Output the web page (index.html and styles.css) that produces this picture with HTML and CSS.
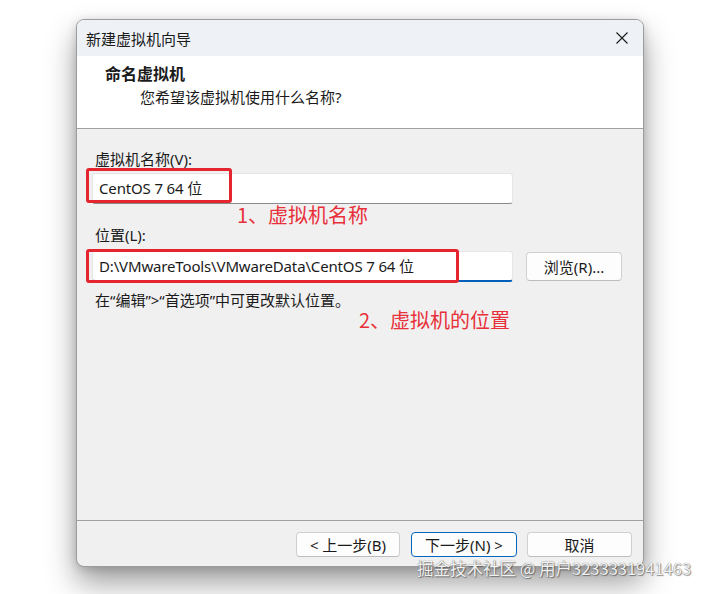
FILE: index.html
```html
<!DOCTYPE html>
<html lang="zh-CN">
<head>
<meta charset="utf-8">
<title>新建虚拟机向导</title>
<link rel="stylesheet" href="styles.css">
</head>
<body>
<div class="window">
  <div class="titlebar">
    <span class="title">新建虚拟机向导</span>
    <span class="close">
      <svg width="12" height="12" viewBox="0 0 12 12"><path d="M0.5 0.5 L11.5 11.5 M11.5 0.5 L0.5 11.5" stroke="#1a1a1a" stroke-width="1.1" fill="none"/></svg>
    </span>
  </div>
  <div class="header">
    <div class="h-title">命名虚拟机</div>
    <div class="h-sub">您希望该虚拟机使用什么名称?</div>
  </div>
  <div class="sep"></div>
  <div class="content">
    <div class="label">虚拟机名称(V):</div>
    <div class="input name">CentOS 7 64 位</div>
    <div class="label label2">位置(L):</div>
    <div class="row">
      <div class="input loc">D:\VMwareTools\VMwareData\CentOS 7 64 位</div>
      <div class="btn browse">浏览(R)...</div>
    </div>
    <div class="hint">在“编辑”&gt;“首选项”中可更改默认位置。</div>

    <div class="mark box1"></div>
    <div class="mark box2"></div>
    <div class="note note1">1、虚拟机名称</div>
    <div class="note note2">2、虚拟机的位置</div>
  </div>
  <div class="sep"></div>
  <div class="footer">
    <div class="btn back">&lt; 上一步(B)</div>
    <div class="btn next">下一步(N) &gt;</div>
    <div class="btn cancel">取消</div>
  </div>
</div>
<div class="watermark">掘金技术社区 @ 用户3233331941463</div>
</body>
</html>
```

FILE: styles.css
```css
html, body {
  margin: 0;
  padding: 0;
  background: #ffffff;
  width: 709px;
  height: 594px;
  overflow: hidden;
  position: relative;
  font-family: "Noto Sans", "Noto Sans CJK SC", sans-serif;
  font-size: 15px;
  color: #1a1a1a;
}

.window {
  box-sizing: border-box;
  margin: 19px 0 0 76px;
  width: 568px;
  height: 548px;
  border: 1px solid #9c9c9c;
  border-radius: 8px;
  overflow: hidden;
  display: flex;
  flex-direction: column;
  background: #f0f0f0;
  box-shadow: 0 16px 30px rgba(0, 0, 0, 0.38), 0 2px 10px rgba(0, 0, 0, 0.16);
}

.titlebar {
  height: 36px;
  flex: none;
  background: #eef2f7;
  display: flex;
  align-items: center;
  justify-content: space-between;
  padding: 0 15px 0 9px;
}

.title {
  font-size: 15px;
  line-height: 20px;
  margin-top: 1px;
}

.close {
  display: flex;
  width: 12px;
  height: 12px;
}

.header {
  height: 72px;
  flex: none;
  background: #ffffff;
  padding: 8px 0 0 28px;
  box-sizing: border-box;
}

.h-title {
  font-weight: bold;
  font-size: 16px;
  line-height: 20px;
}

.h-sub {
  margin-top: 3px;
  padding-left: 35px;
  font-size: 15px;
  line-height: 20px;
}

.sep {
  height: 1px;
  flex: none;
  background: #a0a0a0;
}

.content {
  flex: 1;
  position: relative;
  padding: 20px 0 0 15px;
  box-sizing: border-box;
}

.label {
  padding-left: 3px;
  line-height: 20px;
}

.label2 {
  margin-top: 21px;
}

.input {
  box-sizing: border-box;
  width: 421px;
  height: 31px;
  background: #ffffff;
  border: 1px solid #e6e6e6;
  border-bottom: 1px solid #8a8a8a;
  border-radius: 3px;
  padding-left: 6px;
  line-height: 29px;
  white-space: nowrap;
  letter-spacing: -0.15px;
}

.name {
  margin-top: 4px;
}

.loc {
  border-bottom: 2px solid #005fb8;
}

.row {
  display: flex;
  align-items: center;
  margin-top: 6px;
}

.btn {
  box-sizing: border-box;
  height: 25px;
  background: #fdfdfd;
  border: 1px solid #d0d0d0;
  border-bottom-color: #bdbdbd;
  border-radius: 4px;
  display: flex;
  align-items: center;
  justify-content: center;
  line-height: 20px;
  white-space: nowrap;
}

.browse {
  width: 96px;
  height: 29px;
  margin-left: 13px;
}

.hint {
  margin-top: 8px;
  padding-left: 3px;
  line-height: 20px;
}

.mark {
  position: absolute;
  box-sizing: border-box;
  border: 3px solid #e42530;
  border-radius: 3px;
}

.box1 {
  left: 9px;
  top: 39px;
  width: 146px;
  height: 35px;
}

.box2 {
  left: 9px;
  top: 120px;
  width: 373px;
  height: 34px;
}

.note {
  position: absolute;
  color: #e8303a;
  font-size: 20px;
  line-height: 26px;
  white-space: nowrap;
  font-family: "Noto Sans CJK SC", sans-serif;
}

.note1 {
  left: 160px;
  top: 73px;
}

.note2 {
  left: 282px;
  top: 178px;
}

.footer {
  height: 45px;
  flex: none;
  display: flex;
  justify-content: flex-end;
  align-items: flex-start;
  padding: 11px 11px 0 0;
  box-sizing: border-box;
  gap: 10px;
}

.back {
  width: 104px;
}

.next {
  width: 106px;
  border: 1px solid #0067c0;
  margin-left: 1px;
}

.cancel {
  width: 105px;
}

.watermark {
  position: absolute;
  left: 417px;
  top: 558px;
  font-size: 16.5px;
  line-height: 20px;
  color: #f2f2f2;
  white-space: nowrap;
  text-shadow: 0 0 1px #5e5e5e, 1px 1px 1px rgba(0, 0, 0, 0.4);
  font-family: "Noto Sans CJK SC", sans-serif;
}
```
